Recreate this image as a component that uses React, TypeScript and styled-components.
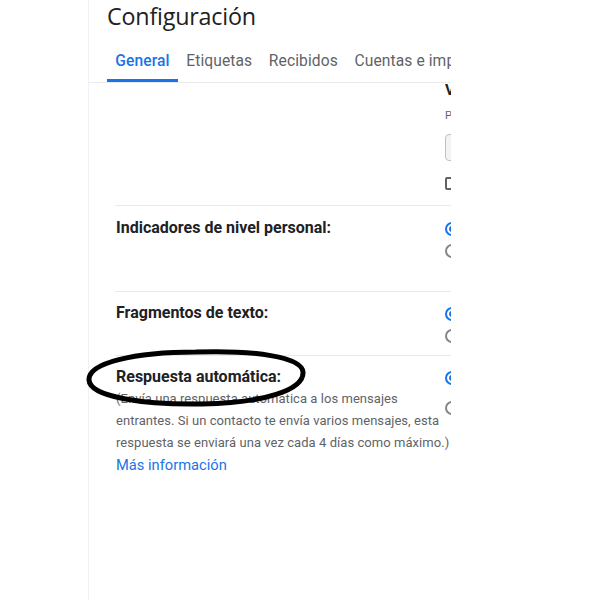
import React from 'react';
import styled, { createGlobalStyle } from 'styled-components';

const GlobalStyle = createGlobalStyle`
  html, body {
    margin: 0;
    padding: 0;
    background: #fff;
  }
  body {
    font-family: Roboto, 'Liberation Sans', Arial, sans-serif;
    color: #202124;
  }
`;

const Page = styled.div`
  position: relative;
  width: 600px;
  height: 600px;
  padding-left: 88px;
  box-sizing: border-box;
  overflow: hidden;
`;

const Panel = styled.div`
  width: 363px;
  height: 600px;
  border-left: 1px solid #eef1f6;
  box-sizing: border-box;
  overflow: hidden;
`;

const Title = styled.h1`
  margin: 0;
  padding: 2px 0 0 18px;
  height: 41px;
  box-sizing: border-box;
  font-size: 23.3px;
  font-weight: 400;
  line-height: 28px;
  color: #202124;
  font-family: 'Open Sans', Roboto, sans-serif;
  letter-spacing: -0.2px;
`;

const TabBar = styled.div`
  display: flex;
  padding-left: 18px;
  border-bottom: 1px solid #e8eaed;
  white-space: nowrap;
`;

const Tab = styled.div<{ $active?: boolean }>`
  padding: 10px 8.3px 0 8.3px;
  height: 41px;
  box-sizing: border-box;
  font-size: 15.6px;
  line-height: 20px;
  letter-spacing: 0.1px;
  color: ${(p) => (p.$active ? '#1a73e8' : '#5f6368')};
  font-weight: ${(p) => (p.$active ? 500 : 400)};
  border-bottom: 3px solid ${(p) => (p.$active ? '#1a73e8' : 'transparent')};
  flex-shrink: 0;
`;

const Rows = styled.div`
  margin-left: 26px;
  padding-top: 1px;
`;

const Row = styled.div<{ $height: number; $top: number; $last?: boolean }>`
  display: grid;
  grid-template-columns: 330px 200px;
  height: ${(p) => p.$height}px;
  box-sizing: border-box;
  border-bottom: ${(p) => (p.$last ? 'none' : '1px solid #e8eaed')};
  padding-top: ${(p) => p.$top}px;
`;

const Label = styled.div`
  padding-left: 1px;
  font-size: 16px;
  font-weight: 700;
  line-height: 20px;
  color: #202124;
`;

const Description = styled.div`
  margin-top: 1px;
  margin-right: -10px;
  padding-left: 1px;
  font-size: 13px;
  font-weight: 400;
  line-height: 22px;
  letter-spacing: 0.05px;
  color: #5f6368;
`;

const MoreLink = styled.a`
  display: block;
  padding-left: 1px;
  font-size: 14.7px;
  line-height: 22px;
  color: #1a73e8;
  text-decoration: none;
`;

const Options = styled.div<{ $gap: number }>`
  display: flex;
  flex-direction: column;
  gap: ${(p) => p.$gap}px;
  padding-top: 1px;
`;

const Option = styled.label`
  display: flex;
  align-items: center;
  gap: 10px;
  font-size: 14px;
  line-height: 20px;
  white-space: nowrap;
  color: #202124;
`;

const Radio = styled.span<{ $checked?: boolean }>`
  width: 14px;
  height: 14px;
  border-radius: 50%;
  box-sizing: border-box;
  border: 2px solid ${(p) => (p.$checked ? '#1a73e8' : '#80868b')};
  display: flex;
  align-items: center;
  justify-content: center;
  flex-shrink: 0;
  &::after {
    content: '';
    display: ${(p) => (p.$checked ? 'block' : 'none')};
    width: 6px;
    height: 6px;
    border-radius: 50%;
    background: #1a73e8;
  }
`;

const PreviewColumn = styled.div`
  display: flex;
  flex-direction: column;
  white-space: nowrap;
  margin-top: -3px;
`;

const SubHeading = styled.div`
  font-size: 15px;
  font-weight: 700;
  line-height: 18px;
`;

const SmallCaption = styled.div`
  margin-top: 10px;
  font-size: 11px;
  line-height: 14px;
  color: #5f6368;
`;

const Select = styled.div`
  margin-top: 11px;
  width: 120px;
  height: 25px;
  border: 1px solid #bdc1c6;
  border-radius: 4px;
  background: #f1f3f4;
`;

const Checkbox = styled.span`
  margin-top: 16px;
  width: 13px;
  height: 13px;
  border: 2px solid #5f6368;
  border-radius: 2px;
  box-sizing: border-box;
`;

const Annotation = styled.svg`
  position: absolute;
  left: 84px;
  top: 347px;
  pointer-events: none;
`;

interface RadioGroupProps {
  options: string[];
  gap: number;
}

const RadioGroup = ({ options, gap }: RadioGroupProps) => (
  <Options $gap={gap}>
    {options.map((o, i) => (
      <Option key={o}>
        <Radio $checked={i === 0} />
        {o}
      </Option>
    ))}
  </Options>
);

export default function App() {
  return (
    <>
      <GlobalStyle />
      <Page>
        <Panel>
          <Title>Configuración</Title>
          <TabBar>
            <Tab $active>General</Tab>
            <Tab>Etiquetas</Tab>
            <Tab>Recibidos</Tab>
            <Tab>Cuentas e importación</Tab>
          </TabBar>
          <Rows>
            <Row $height={122} $top={0}>
              <div />
              <PreviewColumn>
                <SubHeading>Vista previa</SubHeading>
                <SmallCaption>Posición de la vista</SmallCaption>
                <Select />
                <Checkbox />
              </PreviewColumn>
            </Row>
            <Row $height={86} $top={12}>
              <Label>Indicadores de nivel personal:</Label>
              <RadioGroup gap={2} options={['Sin indicadores', 'Mostrar indicadores']} />
            </Row>
            <Row $height={64} $top={11}>
              <Label>Fragmentos de texto:</Label>
              <RadioGroup gap={2} options={['Mostrar fragmentos', 'Sin fragmentos']} />
            </Row>
            <Row $height={200} $top={11} $last>
              <div>
                <Label>Respuesta automática:</Label>
                <Description>
                  (Envía una respuesta automática a los mensajes entrantes. Si un contacto te
                  envía varios mensajes, esta respuesta se enviará una vez cada 4 días como
                  máximo.)
                </Description>
                <MoreLink href="#">Más información</MoreLink>
              </div>
              <RadioGroup gap={10} options={['Respuesta automática desactivada', 'Respuesta automática activada']} />
            </Row>
          </Rows>
        </Panel>
        <Annotation width="230" height="64" viewBox="0 0 230 64">
          <path
            d="M 112 5 C 50 5, 4 16, 5 33 C 6 50, 60 58, 118 57 C 180 56, 220 43, 219 25 C 218 10, 170 3, 112 5 Z"
            fill="none"
            stroke="#000"
            strokeWidth="5"
          />
        </Annotation>
      </Page>
    </>
  );
}
